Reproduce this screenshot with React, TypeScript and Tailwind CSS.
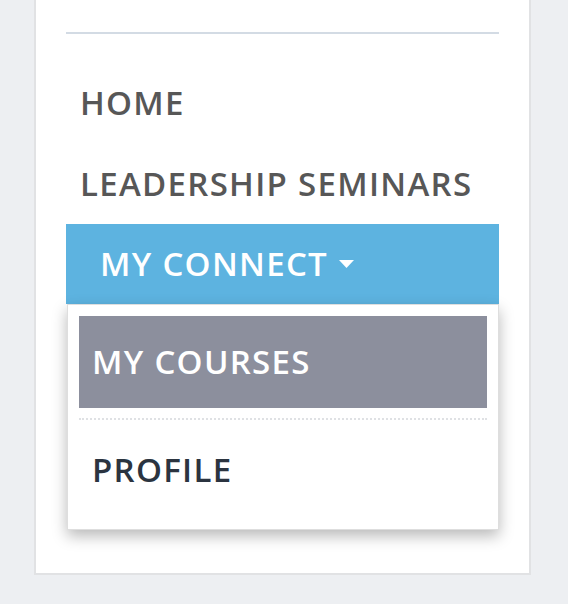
import React from 'react';

const font = { fontFamily: '"Open Sans", "Liberation Sans", sans-serif' };

const App: React.FC = () => {
  return (
    <div className="min-h-[604px] w-[568px] overflow-hidden bg-[#edeff2]" style={font}>
      <div className="ml-[34px] w-[497px] border-2 border-t-0 border-[#e1e2e4] bg-white px-[30px] pb-[43px]">
        <div className="pt-[32px]">
          <div className="h-[2px] bg-[#d3dbe4]" />
        </div>

        <nav className="mt-[28px] flex flex-col">
          <a className="flex h-[81px] items-center pl-[14px] text-[33px] font-semibold tracking-[1.3px] text-[#575757]">
            HOME
          </a>
          <a className="flex h-[81px] items-center pl-[14px] text-[33px] font-semibold tracking-[1.3px] text-[#575757]">
            LEADERSHIP SEMINARS
          </a>

          <div className="relative">
            <button
              type="button"
              className="flex h-[80px] w-full items-center bg-[#5db3e0] pl-[34px] text-[33px] font-semibold tracking-[1.3px] text-white"
            >
              MY CONNECT
              <svg className="ml-[11px] h-[8px] w-[15px]" viewBox="0 0 15 8" aria-hidden="true">
                <path d="M0 0h15L7.5 8z" fill="#fff" />
              </svg>
            </button>

            <div className="ml-px border border-[#dedede] bg-white px-[11px] pb-[10px] pt-[11px] shadow-[0_6px_14px_rgba(0,0,0,0.28)]">
              <div className="flex h-[92px] items-center bg-[#8c8f9d] pl-[13px] text-[33px] font-semibold tracking-[1.3px] text-white">
                MY COURSES
              </div>
              <div className="mt-[10px] border-t-2 border-dotted border-[#dfe1e4]" />
              <div className="flex h-[99px] items-center pl-[13px] text-[33px] font-semibold tracking-[1.3px] text-[#2b3440]">
                PROFILE
              </div>
            </div>
          </div>
        </nav>
      </div>
    </div>
  );
};

export default App;
